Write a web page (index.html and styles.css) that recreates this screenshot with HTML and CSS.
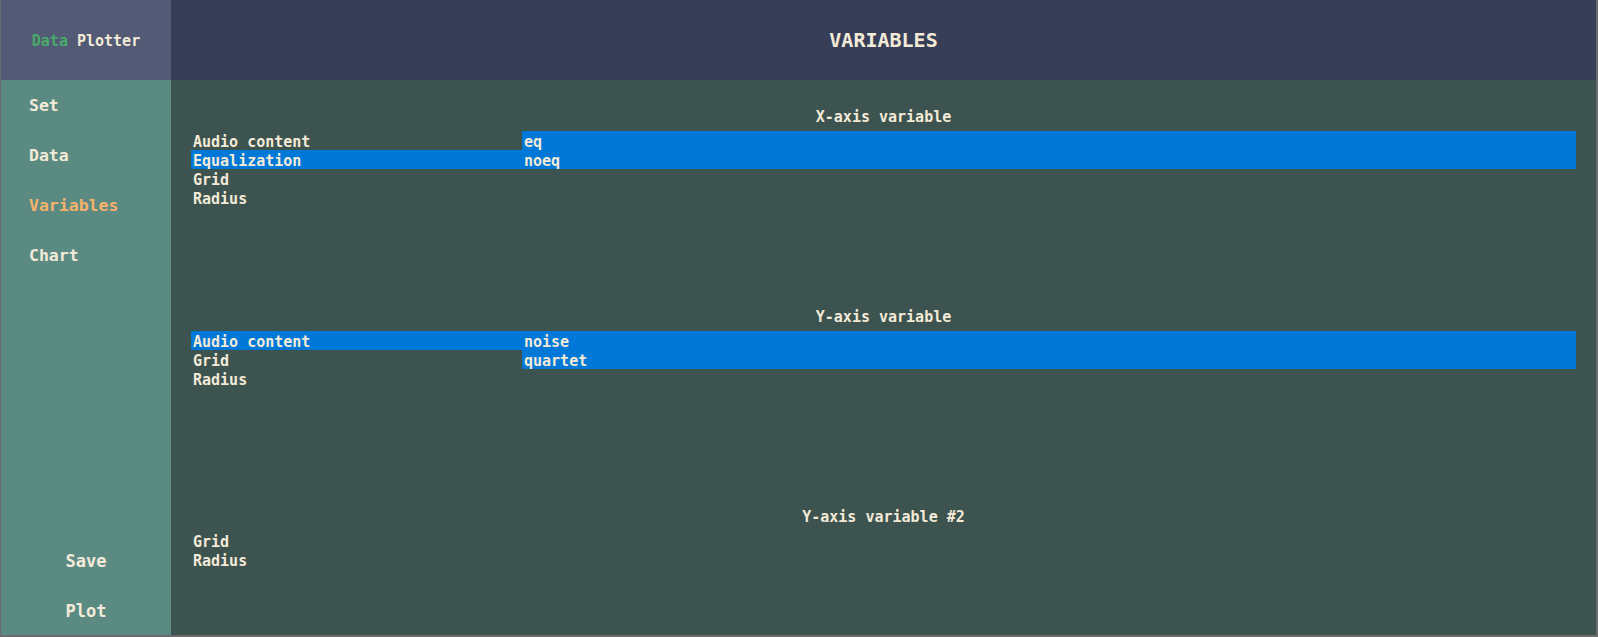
FILE: index.html
```html
<!DOCTYPE html>
<html>
<head>
<meta charset="utf-8">
<link rel="stylesheet" href="styles.css">
</head>
<body>
<div class="app">
  <aside class="sidebar">
    <div class="logo"><span class="logo-green">Data</span> Plotter</div>
    <nav class="nav">
      <div class="nav-item">Set</div>
      <div class="nav-item">Data</div>
      <div class="nav-item active">Variables</div>
      <div class="nav-item">Chart</div>
    </nav>
    <div class="actions">
      <div class="action">Save</div>
      <div class="action">Plot</div>
    </div>
  </aside>
  <main class="main">
    <header class="header">VARIABLES</header>
    <div class="content">
      <section class="section">
        <div class="section-title">X-axis variable</div>
        <div class="lists">
          <ul class="list left">
            <li>Audio content</li>
            <li class="sel">Equalization</li>
            <li>Grid</li>
            <li>Radius</li>
          </ul>
          <ul class="list right">
            <li class="sel">eq</li>
            <li class="sel">noeq</li>
          </ul>
        </div>
      </section>
      <section class="section">
        <div class="section-title">Y-axis variable</div>
        <div class="lists">
          <ul class="list left">
            <li class="sel">Audio content</li>
            <li>Grid</li>
            <li>Radius</li>
          </ul>
          <ul class="list right">
            <li class="sel">noise</li>
            <li class="sel">quartet</li>
          </ul>
        </div>
      </section>
      <section class="section">
        <div class="section-title">Y-axis variable #2</div>
        <div class="lists">
          <ul class="list left">
            <li>Grid</li>
            <li>Radius</li>
          </ul>
          <ul class="list right"></ul>
        </div>
      </section>
    </div>
  </main>
</div>
</body>
</html>
```
FILE: styles.css
```css
* { box-sizing: border-box; }
html, body { margin: 0; padding: 0; }
body {
  width: 1598px;
  height: 637px;
  overflow: hidden;
  background: #6b6b6b;
  font-family: "DejaVu Sans Mono", "Liberation Mono", monospace;
  font-weight: bold;
  color: #f3ead8;
}
.app {
  display: flex;
  height: 635px;
  margin-left: 1px;
  margin-right: 2px;
  overflow: hidden;
}
.sidebar {
  width: 170px;
  flex: none;
  background: #5b8a83;
  display: flex;
  flex-direction: column;
}
.logo {
  height: 80px;
  background: #525a76;
  display: flex;
  align-items: center;
  justify-content: center;
  font-size: 15px;
  white-space: pre;
  padding-top: 2px;
}
.logo-green { color: #4aaa6a; }
.nav { display: flex; flex-direction: column; }
.nav-item {
  height: 50px;
  display: flex;
  align-items: center;
  padding-left: 28px;
  font-size: 16.5px;
}
.nav-item.active { color: #f5b36a; }
.actions {
  margin-top: auto;
  display: flex;
  flex-direction: column;
}
.action {
  height: 50px;
  display: flex;
  align-items: center;
  justify-content: center;
  padding-top: 2px;
  font-size: 17px;
}
.main {
  flex: 1;
  display: flex;
  flex-direction: column;
  background: #3d5350;
  min-width: 0;
}
.header {
  height: 80px;
  flex: none;
  background: #373f58;
  display: flex;
  align-items: center;
  justify-content: center;
  font-size: 20px;
}
.content {
  flex: 1;
  overflow: hidden;
  padding: 0 20px;
}
.section {
  height: 200px;
  padding-top: 27px;
}
.section-title {
  height: 20px;
  line-height: 20px;
  text-align: center;
  font-size: 15px;
  margin-bottom: 4px;
}
.lists {
  display: flex;
}
.list {
  list-style: none;
  margin: 0;
  padding: 0;
  font-size: 15px;
}
.list.left { width: 331px; flex: none; }
.list.right { flex: 1; }
.list li {
  height: 19px;
  line-height: 15px;
  padding-top: 4px;
  padding-left: 2px;
  white-space: pre;
}
.list li.sel { background: #0078d7; }
```
